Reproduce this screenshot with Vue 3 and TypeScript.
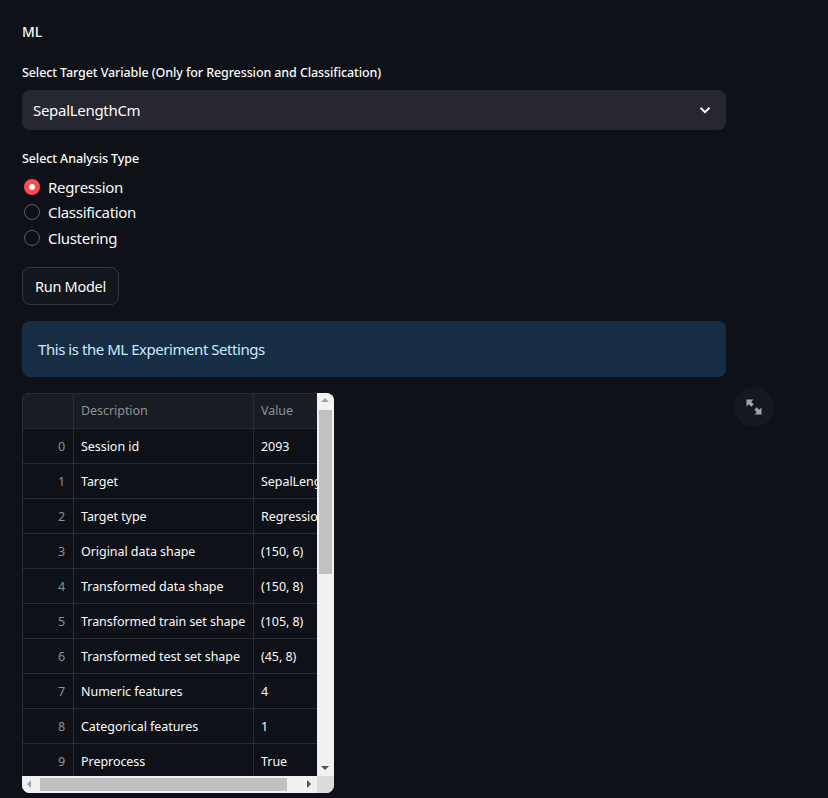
<script setup lang="ts">
const rows: [string, string][] = [
  ['Session id', '2093'],
  ['Target', 'SepalLengthCm'],
  ['Target type', 'Regression'],
  ['Original data shape', '(150, 6)'],
  ['Transformed data shape', '(150, 8)'],
  ['Transformed train set shape', '(105, 8)'],
  ['Transformed test set shape', '(45, 8)'],
  ['Numeric features', '4'],
  ['Categorical features', '1'],
  ['Preprocess', 'True'],
]
const options = ['Regression', 'Classification', 'Clustering']
</script>

<template>
  <main class="page">
    <p class="title">ML</p>

    <label class="label first">Select Target Variable (Only for Regression and Classification)</label>
    <div class="select">
      <span>SepalLengthCm</span>
      <svg width="16" height="16" viewBox="0 0 16 16">
        <path d="M3.500 5.800 8 10.200l4.500-4.400" fill="none" stroke="#fafafa" stroke-width="2" />
      </svg>
    </div>

    <label class="label second">Select Analysis Type</label>
    <div class="radios">
      <div class="radio" v-for="(opt, i) in options" :key="opt">
        <span class="dot" :class="i == 0 ? 'on' : ''"></span>
        <span>{{ opt }}</span>
      </div>
    </div>

    <button class="run">Run Model</button>

    <div class="alert">This is the ML Experiment Settings</div>

    <div class="frame">
      <div class="view">
        <table>
          <colgroup>
            <col class="c0" />
            <col class="c1" />
            <col class="c2" />
          </colgroup>
          <thead>
            <tr>
              <th></th>
              <th>Description</th>
              <th>Value</th>
            </tr>
          </thead>
          <tbody>
            <tr v-for="(row, i) in rows" :key="row[0]">
              <td class="idx">{{ i }}</td>
              <td>{{ row[0] }}</td>
              <td>{{ row[1] }}</td>
            </tr>
          </tbody>
        </table>
      </div>
      <div class="vbar">
        <span class="arrow up"></span>
        <div class="vtrack"><div class="vthumb"></div></div>
        <span class="arrow down"></span>
      </div>
      <div class="hbar">
        <span class="arrow left"></span>
        <div class="htrack"><div class="hthumb"></div></div>
        <span class="arrow right"></span>
      </div>
      <div class="corner"></div>
    </div>

    <div class="expand">
      <svg width="16" height="16" viewBox="0 0 16 16" fill="#a3a3a6">
        <path d="M0.500 0.500h7L5.200 2.800l2.500 2.500-2.400 2.400-2.500-2.500L0.500 7.500z" />
        <path d="M15.500 15.500h-7l2.300-2.300-2.500-2.500 2.400-2.400 2.500 2.500 2.300-2.300z" />
      </svg>
    </div>
  </main>
</template>

<style>
html,
body {
  margin: 0;
  background: #0e1117;
}
</style>

<style scoped>
.page {
  position: relative;
  box-sizing: border-box;
  width: 828px;
  height: 798px;
  overflow: hidden;
  padding: 22px 0 0 22px;
  background: #0e1117;
  color: #fafafa;
  font-family: "Noto Sans", sans-serif;
}

.title {
  margin: 0;
  font-size: 14px;
  line-height: 20px;
  font-weight: 500;
}

.label {
  display: block;
  font-size: 12.500px;
  line-height: 18px;
  letter-spacing: -0.1px;
  font-weight: 500;
}

.label.first {
  margin-top: 22px;
  height: 26px;
}

.label.second {
  margin-top: 20px;
  height: 20px;
}

.select {
  box-sizing: border-box;
  width: 704px;
  height: 40px;
  padding: 0 13px 0 11px;
  border-radius: 8px;
  background: #262730;
  display: flex;
  align-items: center;
  justify-content: space-between;
  font-size: 15px;
  letter-spacing: -0.3px;
}

.radios {
  display: flex;
  flex-direction: column;
  margin-top: 4px;
}

.radio {
  height: 25.500px;
  display: flex;
  align-items: center;
  gap: 8px;
  padding-left: 2px;
  font-size: 15px;
  letter-spacing: -0.3px;
}

.dot {
  box-sizing: border-box;
  width: 16px;
  height: 16px;
  border-radius: 50%;
  border: 1px solid #5b5d63;
  background: #0e1117;
}

.dot.on {
  border: 5px solid #ff4b4b;
  background: #fff;
}

.run {
  display: block;
  box-sizing: border-box;
  width: 97px;
  height: 38px;
  margin-top: 16px;
  padding: 0;
  border: 1px solid #34363e;
  border-radius: 8px;
  background: #13161d;
  color: #fafafa;
  font-family: inherit;
  font-size: 14.500px;
  letter-spacing: -0.3px;
}

.alert {
  box-sizing: border-box;
  width: 704px;
  height: 56px;
  margin-top: 16px;
  padding: 0 16px;
  border-radius: 8px;
  background: #172d43;
  color: #c7ebff;
  display: flex;
  align-items: center;
  font-size: 15px;
  letter-spacing: -0.45px;
}

.frame {
  box-sizing: border-box;
  width: 312px;
  height: 400px;
  margin-top: 16px;
  border-radius: 8px;
  overflow: hidden;
  display: grid;
  grid-template-columns: 295px 17px;
  grid-template-rows: 383px 17px;
  background: #f1f1f1;
}

.view {
  overflow: hidden;
  background: #0e1117;
  border-top: 1px solid #292c33;
  border-left: 1px solid #292c33;
  box-sizing: border-box;
}

table {
  table-layout: fixed;
  width: 380px;
  border-collapse: collapse;
  font-size: 12.500px;
  letter-spacing: -0.05px;
}

.c0 {
  width: 50.500px;
}

.c1 {
  width: 180px;
}

th,
td {
  box-sizing: border-box;
  height: 35px;
  padding: 0 8px 0 7px;
  border-right: 1px solid #292c33;
  border-bottom: 1px solid #292c33;
  text-align: left;
  white-space: nowrap;
  overflow: hidden;
  font-weight: 400;
}

th {
  background: #1a1c24;
  color: #8e9096;
}

.idx {
  text-align: right;
  color: #8e9096;
}

.vbar {
  display: flex;
  flex-direction: column;
  align-items: center;
  background: #f1f1f1;
}

.vtrack {
  flex: 1;
  width: 100%;
  display: flex;
  padding: 0 2px;
  box-sizing: border-box;
}

.vthumb {
  width: 100%;
  height: 164px;
  background: #c1c1c1;
}

.hbar {
  display: flex;
  align-items: center;
  background: #f1f1f1;
}

.htrack {
  flex: 1;
  height: 100%;
  padding: 2px 0 2px 1px;
  box-sizing: border-box;
}

.hthumb {
  width: 247px;
  height: 100%;
  background: #c1c1c1;
}

.corner {
  background: #dcdcdc;
}

.arrow {
  flex: none;
  width: 17px;
  height: 17px;
  box-sizing: border-box;
  display: block;
  position: relative;
}

.arrow::after {
  content: "";
  position: absolute;
  width: 0;
  height: 0;
  border: 4px solid transparent;
}

.arrow.up::after {
  left: 4px;
  top: 1px;
  border-bottom-color: #a3a3a3;
}

.arrow.down::after {
  left: 4px;
  top: 7px;
  border-top-color: #505050;
}

.arrow.left::after {
  left: 1px;
  top: 4px;
  border-right-color: #a3a3a3;
}

.arrow.right::after {
  left: 7px;
  top: 4px;
  border-left-color: #505050;
}

.expand {
  position: absolute;
  left: 734px;
  top: 387px;
  width: 40px;
  height: 40px;
  border-radius: 50%;
  background: #14181f;
  display: flex;
  align-items: center;
  justify-content: center;
}
</style>
